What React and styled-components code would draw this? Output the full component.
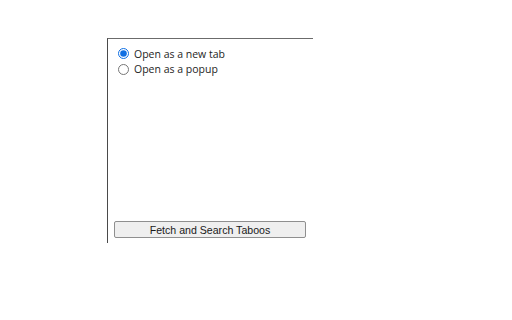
import React, { useState } from "react";
import styled, { createGlobalStyle } from "styled-components";

const GlobalStyle = createGlobalStyle`
  html, body {
    margin: 0;
    padding: 0;
    background: #ffffff;
  }
  body {
    width: 512px;
    height: 320px;
    overflow: hidden;
  }
`;

const Page = styled.div`
  padding: 38px 0 0 107px;
`;

const Panel = styled.div`
  width: 206px;
  height: 205px;
  box-sizing: border-box;
  border-top: 1px solid #6b6b6b;
  border-left: 1px solid #4a4a4a;
  padding: 9px 6px 5px 10px;
  display: flex;
  flex-direction: column;
`;

const Options = styled.div`
  display: flex;
  flex-direction: column;
  gap: 4px;
  flex: 1;
`;

const Option = styled.label`
  display: flex;
  align-items: center;
  gap: 5px;
  height: 11.5px;
  font-family: "Open Sans", "Noto Sans", sans-serif;
  font-size: 10.5px;
  color: #1e1e1e;
  cursor: pointer;
`;

const Radio = styled.input`
  width: 11px;
  height: 11px;
  margin: 0;
  accent-color: #0f6fe3;
`;

const Button = styled.button`
  margin-left: -4px;
  width: 192px;
  height: 17px;
  padding: 0;
  border: 1px solid #8f8f8f;
  border-radius: 2px;
  background: #efefef;
  font-family: "Liberation Sans", Arial, sans-serif;
  font-size: 10.6px;
  color: #1a1a1a;
`;

export default function App() {
  const [mode, setMode] = useState("tab");
  return (
    <>
      <GlobalStyle />
      <Page>
        <Panel>
          <Options>
            <Option>
              <Radio
                type="radio"
                name="mode"
                checked={mode === "tab"}
                onChange={() => setMode("tab")}
              />
              Open as a new tab
            </Option>
            <Option>
              <Radio
                type="radio"
                name="mode"
                checked={mode === "popup"}
                onChange={() => setMode("popup")}
              />
              Open as a popup
            </Option>
          </Options>
          <Button>Fetch and Search Taboos</Button>
        </Panel>
      </Page>
    </>
  );
}
